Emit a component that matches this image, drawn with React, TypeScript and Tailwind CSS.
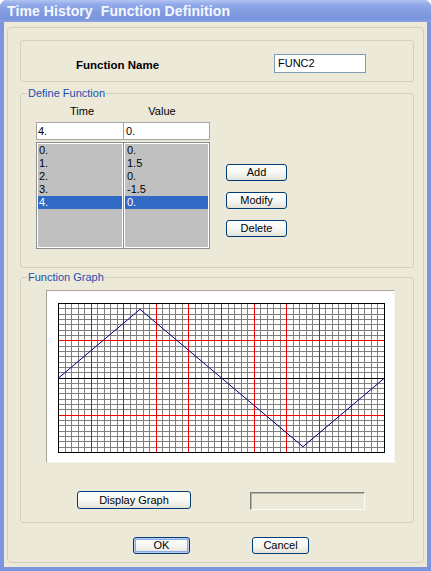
import React from "react";

const btn =
  "flex items-center justify-center rounded-[3px] border border-[#003C74] bg-[linear-gradient(180deg,#FFFFFF_0%,#F6F6F2_55%,#E3E1D8_100%)] text-[11px] leading-none text-black";

function Graph() {
  const gx = 11;
  const gy = 12;
  const gw = 326;
  const gh = 149;
  const cols = 50;
  const sub = 5;
  const minor: React.ReactNode[] = [];
  const red: React.ReactNode[] = [];
  const black: React.ReactNode[] = [];
  for (let i = 0; i <= cols; i++) {
    const x = Math.round(gx + (i * gw) / cols) + 0.5;
    const el = (c: string) => (
      <line key={"v" + i} x1={x} y1={gy} x2={x} y2={gy + gh} stroke={c} strokeWidth={1} />
    );
    if (i === 0 || i === cols) black.push(el("#000"));
    else if (i % sub === 0) red.push(el("#F00000"));
    else minor.push(el("#808080"));
  }
  for (let j = 0; j <= 28; j++) {
    const y = Math.round(gy + (j * gh) / 28) + 0.5;
    const el = (c: string) => (
      <line key={"h" + j} x1={gx} y1={y} x2={gx + gw + 1} y2={y} stroke={c} strokeWidth={1} />
    );
    if (j === 0 || j === 28 || j === 14) black.push(el("#000"));
    else if (j % 7 === 0) red.push(el("#F00000"));
    else minor.push(el("#808080"));
  }
  const pts: [number, number][] = [
    [0, 0],
    [1, 1.5],
    [2, 0],
    [3, -1.5],
    [4, 0],
  ];
  const cy = gy + gh / 2 + 0.5;
  const poly = pts.map(([t, v]) => `${gx + 0.5 + t * (gw / 4)},${cy - v * 45.8}`).join(" ");
  return (
    <svg width={347} height={171} className="block">
      {minor}
      {red}
      {black}
      <polyline points={poly} fill="none" stroke="#000080" strokeWidth={1} />
    </svg>
  );
}

export default function App() {
  const times = ["0.", "1.", "2.", "3.", "4."];
  const values = ["0.", "1.5", "0.", "-1.5", "0."];
  const sel = 4;
  return (
    <div className="w-[431px] h-[571px] flex flex-col bg-[#7B96DE] rounded-t-[7px] overflow-hidden font-['Liberation_Sans',Arial,sans-serif]">
      <div className="h-[22px] shrink-0 flex items-center pl-[7px] bg-[linear-gradient(180deg,#B2C4F2_0%,#92AAE8_20%,#819BE0_55%,#7A95DD_85%,#8AA2E2_100%)]">
        <span className="text-[14px] font-bold text-[#F4F7FF] leading-none tracking-[0.1px]">
          Time History&nbsp; Function Definition
        </span>
      </div>
      <div className="flex-1 mx-[4px] mb-[4px] bg-[#ECE9D8] pt-[5px] px-[3px] pb-[4px] flex">
        <div className="flex-1 border border-[#D3D0C0] rounded-[4px] pl-[12px] pt-[12px] flex flex-col text-black">
          <div className="w-[394px] h-[42px] shrink-0 border border-[#D3D0C0] rounded-[3px] flex items-start">
            <span className="ml-[55px] mt-[17px] w-[198px] text-[11.5px] leading-[14px] font-bold">
              Function Name
            </span>
            <div className="mt-[13px] w-[92px] h-[19px] border border-[#7F9DB9] bg-white pl-[3px] flex items-center text-[11px]">
              FUNC2
            </div>
          </div>

          <fieldset className="mt-[5px] w-[394px] shrink-0 border border-[#D3D0C0] rounded-[3px]">
            <legend className="ml-[6px] px-[1px] text-[11px] leading-[12px] text-[#1C4FAE]">
              Define Function
            </legend>
            <div className="pl-[15px] pt-[6px] pb-[18px] flex">
              <div className="flex flex-col w-[174px]">
                <div className="flex h-[13px] text-[11px] leading-[13px]">
                  <span className="w-[92px] text-center">Time</span>
                  <span className="w-[68px] text-center">Value</span>
                </div>
                <div className="mt-[4px] h-[18px] flex border border-[#A7A6A0] bg-white text-[11px] leading-[16px]">
                  <div className="w-[86px] pl-[1px]">4.</div>
                  <div className="w-px bg-[#A7A6A0]" />
                  <div className="flex-1 pl-[2px]">0.</div>
                </div>
                <div className="mt-[2px] h-[107px] flex gap-px border border-[#8E8E8E] bg-[#8E8E8E] text-[11px]">
                  <div className="w-[86px] bg-[#C0C0C0] border border-white">
                    {times.map((t, i) => (
                      <div
                        key={i}
                        className={
                          "h-[13px] leading-[13px] pl-[1px] " +
                          (i === sel ? "bg-[#316AC5] text-white" : "")
                        }
                      >
                        {t}
                      </div>
                    ))}
                  </div>
                  <div className="flex-1 bg-[#C0C0C0] border border-white">
                    {values.map((t, i) => (
                      <div
                        key={i}
                        className={
                          "h-[13px] leading-[13px] pl-[2px] " +
                          (i === sel ? "bg-[#316AC5] text-white" : "")
                        }
                      >
                        {t}
                      </div>
                    ))}
                  </div>
                </div>
              </div>
              <div className="ml-[16px] pt-[59px] flex flex-col gap-[11px]">
                <div className={btn + " w-[61px] h-[17px]"}>Add</div>
                <div className={btn + " w-[61px] h-[17px]"}>Modify</div>
                <div className={btn + " w-[61px] h-[17px]"}>Delete</div>
              </div>
            </div>
          </fieldset>

          <fieldset className="mt-[3px] w-[394px] shrink-0 border border-[#D3D0C0] rounded-[3px]">
            <legend className="ml-[6px] px-[1px] text-[11px] leading-[12px] text-[#1C4FAE]">
              Function Graph
            </legend>
            <div className="pl-[25px] pt-[7px] pb-[12px] flex flex-col">
              <div className="w-[349px] h-[173px] bg-white border border-t-[#A5A39A] border-l-[#A5A39A] border-r-[#F4F3EE] border-b-[#F4F3EE]">
                <Graph />
              </div>
              <div className="mt-[28px] flex items-start">
                <div className={btn + " ml-[31px] w-[114px] h-[18px]"}>Display Graph</div>
                <div className="ml-[59px] mt-[1px] w-[115px] h-[18px] border border-t-[#7A7A7A] border-l-[#7A7A7A] border-r-[#FAFAF7] border-b-[#FAFAF7] shadow-[inset_1px_1px_0_#B5B3AA]" />
              </div>
            </div>
          </fieldset>

          <div className="mt-[14px] flex">
            <div
              className={
                btn +
                " ml-[113px] w-[57px] h-[17px] shadow-[inset_0_0_0_1px_#B9CDF5,inset_0_0_0_2px_#8AAAE6]"
              }
            >
              OK
            </div>
            <div className={btn + " ml-[62px] w-[57px] h-[17px]"}>Cancel</div>
          </div>
        </div>
      </div>
    </div>
  );
}
